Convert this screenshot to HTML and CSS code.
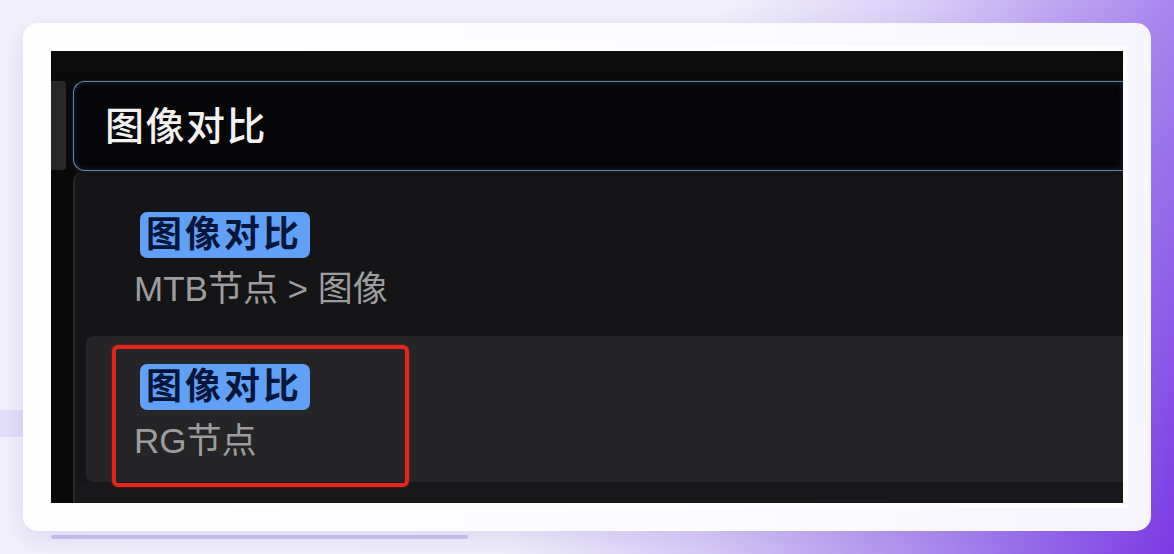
FILE: index.html
```html
<!DOCTYPE html>
<html lang="zh">
<head>
<meta charset="utf-8">
<title>图像对比</title>
<link rel="stylesheet" href="styles.css">
</head>
<body>
<div class="deco-band"></div>
<div class="deco-line"></div>
<div class="card">
  <div class="shot">
    <div class="topbar"></div>
    <div class="main">
      <div class="gutter"><div class="gutter-tab"></div></div>
      <div class="panel">
        <div class="search">图像对比</div>
        <div class="list">
          <div class="item">
            <span class="tag">图像对比</span>
            <div class="path">MTB节点 &gt; 图像</div>
          </div>
          <div class="item item-hover">
            <span class="tag">图像对比</span>
            <div class="path">RG节点</div>
          </div>
        </div>
        <div class="footer"></div>
      </div>
    </div>
    <div class="annotation"></div>
  </div>
</div>
</body>
</html>
```

FILE: styles.css
```css
html, body {
  margin: 0;
  height: 100%;
}
body {
  position: relative;
  overflow: hidden;
  padding: 23px;
  box-sizing: border-box;
  font-family: "Liberation Sans", "Noto Sans CJK SC", sans-serif;
  background:
    linear-gradient(112deg, #f2f1fb 0%, #f1f0fb 52%, #d9cdf6 66%, #a985ee 84%, #7b3ae6 100%);
}
.deco-band {
  position: absolute;
  left: 0;
  top: 410px;
  width: 40px;
  height: 27px;
  background: #e2defa;
}
.deco-line {
  position: absolute;
  left: 51px;
  top: 535px;
  width: 417px;
  height: 4px;
  border-radius: 2px;
  background: #cac2f3;
}
.card {
  position: relative;
  width: 1128px;
  height: 508px;
  box-sizing: border-box;
  padding: 28px;
  border-radius: 15px;
  background: linear-gradient(90deg, #fefeff 0%, #fcfbff 60%, #f6f4fc 100%);
  box-shadow: 0 8px 26px rgba(110, 90, 190, 0.16);
}
.shot {
  position: relative;
  width: 1072px;
  height: 452px;
  background: #0b0b0b;
  display: flex;
  flex-direction: column;
  overflow: hidden;
  box-shadow: 0 0 0 5px rgba(255, 255, 255, 0.7);
}
.topbar {
  height: 30px;
  flex: none;
  background: linear-gradient(180deg, #0d0d0d, #0a0a0a);
}
.main {
  flex: 1;
  display: flex;
}
.gutter {
  width: 22px;
  flex: none;
  background: #090909;
}
.gutter-tab {
  width: 15px;
  height: 89px;
  background: #292626;
  border-radius: 0 3px 3px 0;
}
.panel {
  flex: 1;
  display: flex;
  flex-direction: column;
  min-width: 0;
}
.search {
  height: 90px;
  box-sizing: border-box;
  border: 1.5px solid #6483a9;
  border-right: none;
  border-radius: 12px 0 0 12px;
  background: #060609;
  box-shadow: inset 0 0 6px rgba(40, 80, 140, 0.35), 0 0 2px rgba(100, 140, 200, 0.4);
  color: #f2f2f2;
  font-size: 39px;
  font-weight: 500;
  line-height: 89px;
  padding-left: 31px;
  letter-spacing: 1.5px;
}
.list {
  margin-top: 1px;
  padding-top: 12px;
  border-left: 2px solid #2a2a2c;
  border-top-left-radius: 10px;
  background: #151517;
  display: flex;
  flex-direction: column;
  gap: 6px;
}
.item {
  height: 146px;
  box-sizing: border-box;
  margin-left: 11px;
  padding: 28px 0 0 48px;
  border-radius: 7px 0 0 7px;
}
.item-hover {
  background: #252527;
}
.tag {
  display: inline-block;
  margin-left: 6px;
  height: 46px;
  line-height: 46px;
  padding: 0 8px 0 6px;
  border-radius: 7px;
  background: #60a0f7;
  color: #06163a;
  font-size: 36px;
  font-weight: 700;
  letter-spacing: 3px;
  vertical-align: top;
}
.path {
  margin-top: 11px;
  height: 40px;
  line-height: 40px;
  font-size: 35px;
  color: #9d9d9f;
}
.footer {
  flex: 1;
  background: #18181a;
  border-left: 2px solid #2a2a2c;
}
.annotation {
  position: absolute;
  left: 61px;
  top: 294px;
  width: 297px;
  height: 142px;
  box-sizing: border-box;
  border: 4px solid #e4251c;
  border-radius: 6px;
  box-shadow: 0 0 3px rgba(228, 37, 28, 0.5);
}
```
